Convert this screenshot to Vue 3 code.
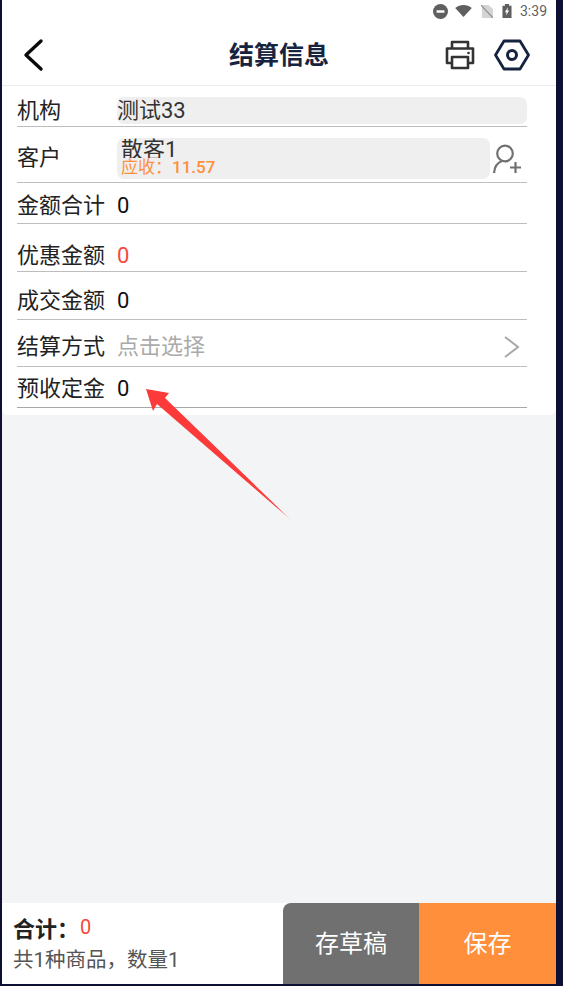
<script setup>
const rows = [
  { key: 'total', label: '金额合计', value: '0' },
  { key: 'discount', label: '优惠金额', value: '0', red: true },
  { key: 'deal', label: '成交金额', value: '0' },
]
</script>

<template>
  <div class="frame">
    <div class="screen">
      <div class="status">
        <svg class="s-dnd" width="15" height="15" viewBox="0 0 16 16"><circle cx="8" cy="8" r="8" fill="#5f5f5f"/><rect x="3.800" y="6.700" width="8.400" height="2.600" fill="#fff"/></svg>
        <svg class="s-wifi" width="17" height="12" viewBox="0 0 18 13"><path d="M0 3.200C5 -1 13 -1 18 3.200L9 13Z" fill="#5f5f5f"/></svg>
        <svg class="s-sim" width="12" height="13" viewBox="0 0 14 15"><path d="M1 0H9L14 5V15H1Z" fill="#d4d4d4"/><path d="M0 0L14 15" stroke="#8f8f8f" stroke-width="1.300"/></svg>
        <svg class="s-bat" width="10" height="14" viewBox="0 0 11 17"><path d="M3 0H8V2H11V17H0V2H3Z" fill="#5f5f5f"/><path d="M6.500 4L3 10H5L4.500 14L8 8H6Z" fill="#fff"/></svg>
        <span class="time">3:39</span>
      </div>
      <header class="nav">
        <div class="nav-left">
          <svg width="22" height="34" viewBox="0 0 22 34"><path d="M19 3L4 17L19 31" fill="none" stroke="#0a0a0a" stroke-width="3.400" stroke-linecap="round" stroke-linejoin="round"/></svg>
        </div>
        <h1 class="title">结算信息</h1>
        <div class="nav-right">
          <svg width="32" height="32" viewBox="0 0 32 32" fill="none" stroke="#333" stroke-width="2.600" stroke-linejoin="round"><path d="M8 9V3H24V9"/><path d="M8 24H3V9.500H29V24H24"/><rect x="8" y="18" width="16" height="11"/><circle cx="24.500" cy="14" r="1.300" fill="#333" stroke="none"/></svg>
          <svg width="36" height="32" viewBox="0 0 36 32" fill="none" stroke="#14233f" stroke-width="2.800" stroke-linejoin="round"><path d="M10 2H26L34.500 16L26 30H10L1.500 16Z"/><circle cx="18" cy="16" r="4.500" stroke-width="3"/></svg>
        </div>
      </header>
      <section class="card">
        <div class="row row-org">
          <span class="label">机构</span>
          <div class="field field-org">测试33</div>
        </div>
        <div class="row row-customer">
          <span class="label">客户</span>
          <div class="field field-customer">
            <div class="cust-name">散客1</div>
            <div class="cust-due">应收：<span class="due-num">11.57</span></div>
          </div>
          <svg class="add-user" width="30" height="30" viewBox="0 0 30 30" fill="none" stroke="#707070" stroke-width="2.200"><circle cx="13" cy="9.500" r="7.800"/><path d="M2 29C2.500 22.500 6 18.500 10 17"/><path d="M18 23.500H29M23.500 18V29"/></svg>
        </div>
        <div v-for="r in rows" :key="r.key" class="row" :class="'row-' + r.key">
          <span class="label">{{ r.label }}</span>
          <span class="value" :class="{ red: r.red }">{{ r.value }}</span>
        </div>
        <div class="row row-pay">
          <span class="label">结算方式</span>
          <span class="placeholder">点击选择</span>
          <svg class="chev" width="18" height="24" viewBox="0 0 18 24"><path d="M2 2L15 12L2 22" fill="none" stroke="#a8a8a8" stroke-width="2"/></svg>
        </div>
        <div class="row row-deposit">
          <span class="label">预收定金</span>
          <span class="value">0</span>
        </div>
      </section>
      <div class="spacer"></div>
      <footer class="foot">
        <div class="sum">
          <div class="sum-top"><b>合计：</b><span class="sum-val">0</span></div>
          <div class="sum-sub">共1种商品，数量1</div>
        </div>
        <button class="btn draft">存草稿</button>
        <button class="btn save">保存</button>
      </footer>
      <svg class="arrow" width="563" height="986" viewBox="0 0 563 986">
        <defs>
          <linearGradient id="arrowFill" x1="146" y1="389" x2="291" y2="520" gradientUnits="userSpaceOnUse">
            <stop offset="0.9" stop-color="#fc3a3a"/>
            <stop offset="1" stop-color="#fc3a3a" stop-opacity="0.35"/>
          </linearGradient>
        </defs>
        <polygon points="146,389 169,393 165,398 291,520 157,404 153,411" fill="url(#arrowFill)"/>
      </svg>
    </div>
  </div>
</template>

<style scoped>
.frame {
  width: 563px;
  height: 986px;
  box-sizing: border-box;
  padding: 0 7px 2px 2px;
  background: #0d1033;
  font-family: Roboto, "Noto Sans CJK SC", sans-serif;
  overflow: hidden;
}
.screen {
  position: relative;
  height: 100%;
  display: flex;
  flex-direction: column;
  background: #f3f4f6;
}
.status {
  height: 24px;
  box-sizing: border-box;
  padding: 0 9px 2px 0;
  flex: none;
  display: flex;
  align-items: center;
  justify-content: flex-end;
  background: #fff;
}
.s-wifi { margin-left: 7px; }
.s-sim { margin-left: 9px; }
.s-bat { margin-left: 9px; }
.time {
  font-size: 14px;
  color: #5f5f5f;
  margin-left: 8px;
}
.nav {
  height: 62px;
  box-sizing: border-box;
  flex: none;
  display: grid;
  grid-template-columns: 1fr auto 1fr;
  align-items: center;
  background: #fff;
  border-bottom: 1px solid #ececec;
}
.nav-left {
  display: flex;
  padding-left: 20px;
}
.title {
  margin: 0 0 3px;
  font-size: 25px;
  font-weight: 700;
  color: #17243f;
}
.nav-right {
  display: flex;
  justify-content: flex-end;
  gap: 18px;
  padding-right: 26px;
}
.card {
  flex: none;
  background: #fff;
  padding: 0 29px 7px 15px;
  border-radius: 0 0 6px 6px;
}
.row {
  display: flex;
  align-items: center;
  box-sizing: border-box;
  border-bottom: 1px solid #bdbdbd;
  font-size: 22px;
  line-height: 30px;
}
.label {
  flex: none;
  width: 100px;
  color: #222;
}
.row-org {
  height: 41px;
  align-items: flex-start;
  padding-top: 11px;
}
.row-org .label { margin-top: -1px; }
.row-customer { height: 56px; padding-top: 6px; }
.row-total { height: 41px; padding-top: 5px; }
.row-discount { height: 48px; padding-top: 16px; }
.row-deal { height: 48px; padding-top: 10px; }
.row-pay { height: 47px; padding-top: 7px; }
.row-deposit {
  height: 41px;
  padding-top: 4px;
  border-bottom-color: #a8a8a8;
}
.field {
  flex: 1;
  background: #efefef;
  border-radius: 7px;
  color: #333;
}
.field-org {
  height: 27px;
  line-height: 28px;
}
.field-customer {
  height: 41px;
  padding-left: 4px;
  overflow: hidden;
  margin-top: 2px;
}
.cust-name {
  font-size: 22px;
  line-height: 24px;
  height: 20px;
  overflow: hidden;
  color: #333;
}
.cust-due {
  font-size: 17px;
  line-height: 18px;
  color: #ff8f3b;
}
.due-num { font-weight: 500; }
.add-user { flex: none; margin: 2px 5px 0 2px; }
.value { color: #111; }
.value.red { color: #f54a3d; }
.placeholder { flex: 1; color: #aaa; }
.chev { flex: none; margin-right: 6px; }
.spacer { flex: 1; }
.foot {
  flex: none;
  height: 81px;
  display: flex;
  background: #fff;
}
.sum {
  flex: 1;
  padding: 8px 0 0 11px;
}
.sum-top {
  display: flex;
  align-items: center;
  height: 32px;
  font-size: 22px;
  color: #222;
}
.sum-top b { font-weight: 700; }
.sum-val { color: #f54a3d; font-size: 20px; margin-left: 1px; }
.sum-sub {
  font-size: 20.500px;
  line-height: 30px;
  margin-top: 2px;
  color: #555;
}
.btn {
  flex: none;
  border: 0;
  padding: 0 0 4px;
  color: #fff;
  font-family: inherit;
  font-size: 24px;
  width: 137px;
}
.draft { width: 136px; background: #707070; border-radius: 8px 0 0 0; }
.save { background: #ff8f3b; }
.arrow {
  position: absolute;
  left: -2px;
  top: 0;
  pointer-events: none;
}
</style>
<style>
html, body { margin: 0; background: #0d1033; }
</style>
